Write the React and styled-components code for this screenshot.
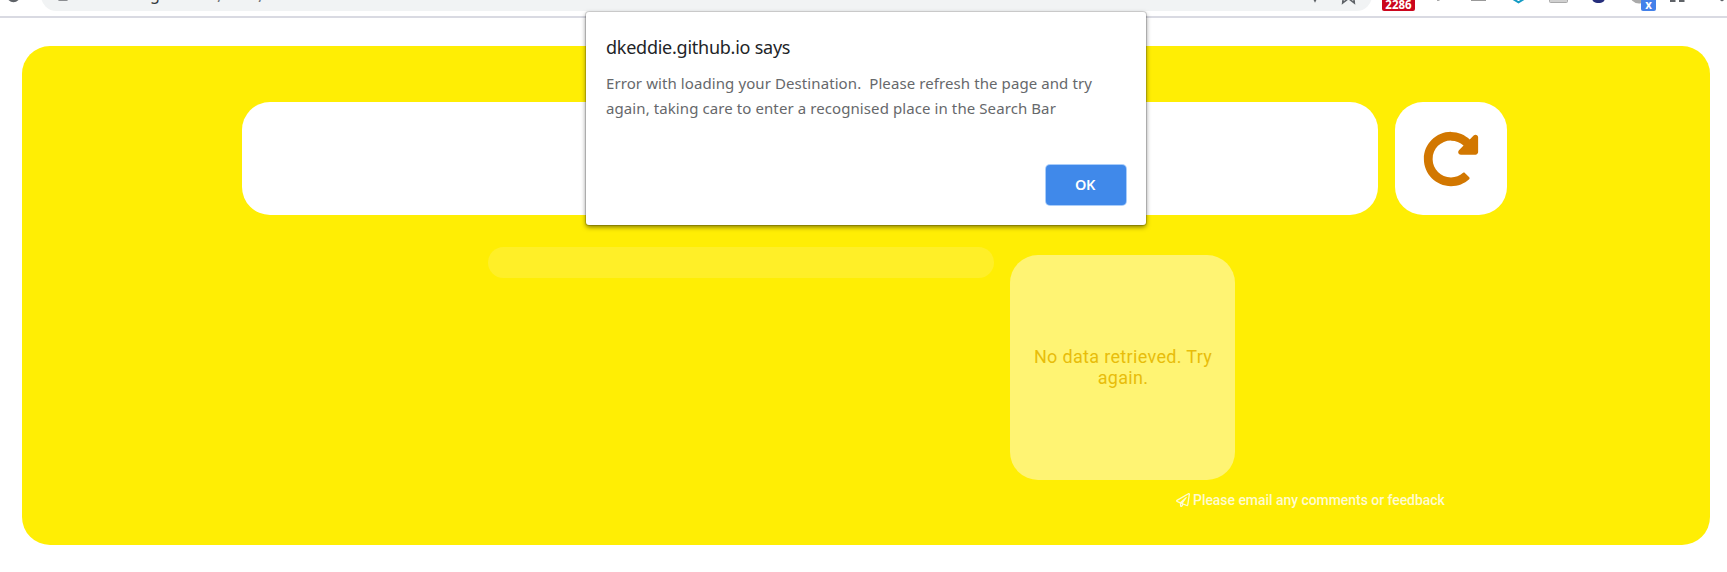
import React from 'react';
import styled, { createGlobalStyle } from 'styled-components';
import { FaRedoAlt, FaRegPaperPlane } from 'react-icons/fa';

const Global = createGlobalStyle`
  * { box-sizing: border-box; }
  body { margin: 0; background: #fff; overflow: hidden; }
`;

const Page = styled.div`
  height: 572px;
  display: flex;
  flex-direction: column;
  font-family: Roboto, sans-serif;
`;

const Toolbar = styled.header`
  height: 18px;
  display: flex;
  border-bottom: 2px solid #d9dae2;
  overflow: hidden;
`;

const ToolbarArt = styled.svg`
  display: block;
  flex: none;
`;

const AddressBar = styled.div`
  width: 1331px;
  height: 31px;
  margin-top: -20px;
  flex: none;
  display: flex;
  justify-content: space-between;
  align-items: flex-end;
  border-radius: 16px;
  background: #f1f3f4;
`;

const Badge = styled.span`
  width: ${(p) => p.$width};
  height: 15px;
  margin-top: -4px;
  flex: none;
  border-radius: 2px;
  background: ${(p) => p.$color};
  color: #fff;
  font: 700 ${(p) => p.$size}/17px 'Noto Sans', sans-serif;
  text-align: center;
`;

const Panel = styled.main`
  margin: 28px 17px 0 22px;
  height: 499px;
  flex: none;
  padding-top: 56px;
  border-radius: 28px;
  background: #ffee04;
`;

const SearchRow = styled.div`
  display: flex;
  gap: 17px;
  margin-left: 220px;
`;

const SearchBar = styled.div`
  width: 1136px;
  height: 113px;
  border-radius: 28px;
  background: #fff;
`;

const RefreshButton = styled.button`
  width: 112px;
  height: 113px;
  padding: 0;
  border: 0;
  border-radius: 28px;
  background: #fff;
  color: #d27700;
  display: flex;
  align-items: center;
  justify-content: center;
`;

const Results = styled.div`
  display: flex;
  gap: 16px;
  margin: 31.5px 0 0 465.5px;
`;

const DestinationBar = styled.div`
  width: 506.5px;
  height: 31.5px;
  border-radius: 16px;
  background: #ffef28;
`;

const DataCard = styled.section`
  width: 225px;
  height: 225px;
  margin-top: 8.5px;
  padding: 0 0 2px 1px;
  border-radius: 28px;
  background: #fff473;
  display: flex;
  align-items: center;
  justify-content: center;
  text-align: center;
  font-size: 18px;
  line-height: 21px;
  letter-spacing: 0.33px;
  color: #e8bd0a;
`;

const Feedback = styled.footer`
  display: flex;
  align-items: center;
  gap: 3px;
  margin: 12px 0 0 1154px;
  font-size: 14px;
  font-weight: 500;
  line-height: 16px;
  letter-spacing: -0.05px;
  color: #fffbd0;
  white-space: nowrap;
`;

const Dialog = styled.div`
  position: absolute;
  left: 586px;
  top: 12px;
  width: 560px;
  height: 213px;
  padding: 22px 20px 20px;
  display: flex;
  flex-direction: column;
  border-radius: 3px;
  background: #fff;
  box-shadow: 0 0 0 1px rgba(0, 0, 0, 0.14), 0 2px 5px rgba(0, 0, 0, 0.5);
  font-family: 'Noto Sans', sans-serif;
`;

const DialogTitle = styled.h1`
  margin: 0;
  font-size: 18px;
  line-height: 26px;
  font-weight: 400;
  letter-spacing: -0.25px;
  color: #222427;
  white-space: nowrap;
`;

const DialogLine = styled.div`
  font-size: 15px;
  line-height: 25px;
  letter-spacing: 0.09px;
  color: #66686b;
  white-space: pre;
`;

const DialogText = styled.div`
  margin-top: 11px;
`;

const OkButton = styled.button`
  width: 80px;
  height: 40px;
  margin: auto 0 0 auto;
  padding: 0 2px 2px 0;
  border: 0;
  border-radius: 4px;
  background: #4089ea;
  box-shadow: 0 0 0 1px #a9cdfa;
  color: #fff;
  font: 600 14.5px 'Noto Sans', sans-serif;
  letter-spacing: -0.4px;
`;

function UrlArt() {
  return (
    <ToolbarArt width="300" height="11" fontFamily="'Noto Sans', sans-serif" fontSize="16" fill="#33363a">
      <rect x="17" y="-9" width="10" height="10" rx="1.5" fill="#8b8d91" />
      <text x="109" y="0">g</text>
      <g fill="#6b6e73">
        <text x="176.5" y="2">/</text>
        <text x="217.5" y="2">/</text>
      </g>
    </ToolbarArt>
  );
}

function AddressActions() {
  return (
    <ToolbarArt width="72" height="11" fill="none" stroke="#5f6368" strokeWidth="1.6">
      <path d="M13 -3L15 1L17 -3" />
      <path d="M43.5 -4L42.7 3L48.5 -1.5L54.3 3L53.5 -4" />
    </ToolbarArt>
  );
}

function ExtensionIcons() {
  return (
    <ToolbarArt width="226" height="16">
      <rect x="22" y="-2" width="2.5" height="3" fill="#aaa" />
      <rect x="56" y="-2" width="15" height="3" fill="#999" />
      <path d="M98 -1L103.5 2.3L109 -1" fill="none" stroke="#149bc4" strokeWidth="2" />
      <rect x="134.5" y="-6" width="18" height="8.5" rx="1" fill="#d0d0d0" stroke="#aaa" />
      <rect x="177" y="-8" width="13" height="11" rx="5" fill="#252e7c" />
      <circle cx="224" cy="-6" r="9.5" fill="#aaa" />
    </ToolbarArt>
  );
}

export default function App() {
  return (
    <Page>
      <Global />
      <Toolbar>
        <ToolbarArt width="41" height="16">
          <circle cx="13.5" cy="-4.5" r="5.5" fill="none" stroke="#5f6368" strokeWidth="2.4" />
        </ToolbarArt>
        <AddressBar>
          <UrlArt />
          <AddressActions />
        </AddressBar>
        <ToolbarArt width="10" height="16" />
        <Badge $width="33px" $size="11.5px" $color="#cb061d">2286</Badge>
        <ExtensionIcons />
        <Badge $width="15px" $size="11.5px" $color="#4381ea">x</Badge>
        <ToolbarArt width="71" height="16" fill="#5f6368">
          <rect x="14" y="-3" width="5.5" height="5" />
          <rect x="23" y="-3" width="5.5" height="5" />
          <circle cx="66" cy="-0.5" r="1.8" />
        </ToolbarArt>
      </Toolbar>
      <Panel>
        <SearchRow>
          <SearchBar />
          <RefreshButton aria-label="Refresh"><FaRedoAlt size={56} /></RefreshButton>
        </SearchRow>
        <Results>
          <DestinationBar />
          <DataCard>No data retrieved. Try<br />again.</DataCard>
        </Results>
        <Feedback><FaRegPaperPlane size={14} />Please email any comments or feedback</Feedback>
      </Panel>
      <Dialog role="alertdialog">
        <DialogTitle>dkeddie.github.io says</DialogTitle>
        <DialogText>
          <DialogLine>{'Error with loading your Destination.  Please refresh the page and try'}</DialogLine>
          <DialogLine>again, taking care to enter a recognised place in the Search Bar</DialogLine>
        </DialogText>
        <OkButton>OK</OkButton>
      </Dialog>
    </Page>
  );
}
